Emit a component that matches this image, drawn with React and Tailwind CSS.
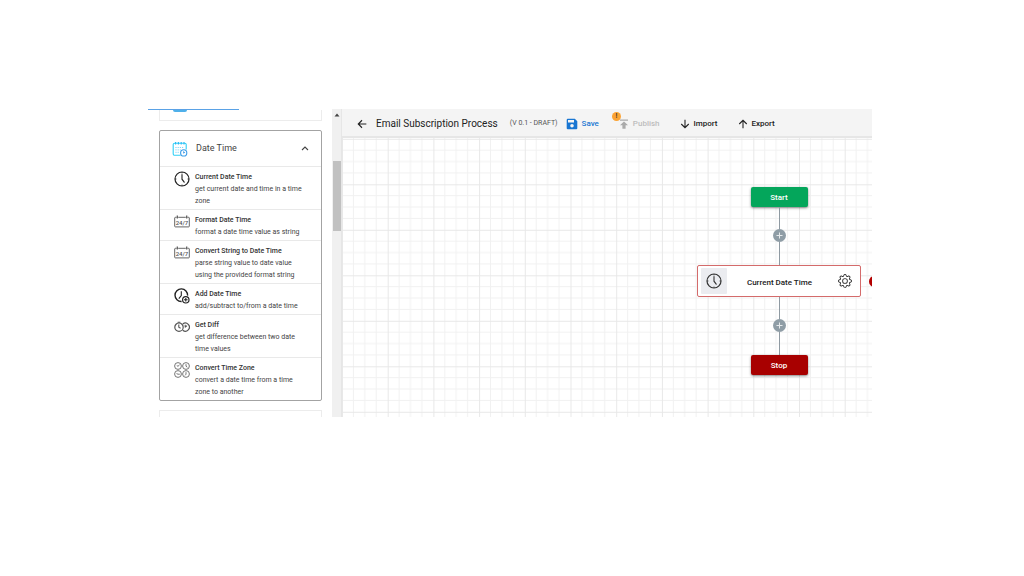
import React, { useState } from "react";
import { BsGear } from "react-icons/bs";

function ClockIcon({ className }) {
  return (
    <svg viewBox="0 0 16 16" className={className} fill="none" stroke="currentColor" aria-hidden="true">
      <circle cx="8" cy="8" r="7" strokeWidth="1.2" />
      <path d="M8 3.6V8.2L10.2 11.2" strokeWidth="1.1" strokeLinecap="round" />
      <path d="M8 1v1.4M8 13.6V15M1 8h1.4M13.6 8H15" strokeWidth="0.9" />
    </svg>
  );
}

function DayNightIcon({ className }) {
  return (
    <svg viewBox="0 0 16 16" className={className} fill="none" stroke="currentColor" aria-hidden="true">
      <path d="M2.6 3.3H1.4a.7.7 0 0 0-.7.7v8.200a.7.7 0 0 0 .7.7h13.2a.7.7 0 0 0 .7-.7V4a.7.7 0 0 0-.7-.7h-1.2M4.2 3.3h7.6" strokeWidth="0.9" />
      <path d="M3.3 1.6v2.8M12.7 1.6v2.800" strokeWidth="1.2" />
      <text x="8" y="10.6" textAnchor="middle" fontSize="6" fontWeight="500" fontFamily="Roboto, sans-serif" fill="currentColor" stroke="none">
        24/7
      </text>
    </svg>
  );
}

function ClockPlusIcon({ className }) {
  return (
    <svg viewBox="0 0 16 16" className={className} fill="none" stroke="currentColor" aria-hidden="true">
      <path d="M13.6 7.6A6.3 6.3 0 1 0 7.6 13.5" strokeWidth="1.4" />
      <path d="M7.3 3.2V7.6L4.8 10.6" strokeWidth="1.1" />
      <circle cx="11.8" cy="11.8" r="3.2" strokeWidth="1.2" />
      <path d="M11.8 10v3.6M10 11.8h3.6" strokeWidth="1.1" />
    </svg>
  );
}

function TwoClocksIcon({ className }) {
  return (
    <svg viewBox="0 0 16 16" className={className} fill="none" stroke="currentColor" aria-hidden="true">
      <circle cx="5" cy="8.2" r="4.2" strokeWidth="1.2" />
      <path d="M8.8 5A4 4 0 1 1 8.8 11.200" strokeWidth="1.2" />
      <path d="M3.700 3.300h2.600M4.800 5.600v2.700l1.800 1M11.200 5.800v2.600M11 8.400l2-1.800" strokeWidth="1.1" />
    </svg>
  );
}

function FourClocksIcon({ className }) {
  return (
    <svg viewBox="0 0 16 16" className={className} fill="none" stroke="currentColor" strokeWidth="0.9" aria-hidden="true">
      <circle cx="4" cy="4" r="3.4" />
      <circle cx="12" cy="4" r="3.4" />
      <circle cx="4" cy="12" r="3.4" />
      <circle cx="12" cy="12" r="3.4" />
      <path d="M4 4.3 5.6 2.8M4 4.3 2.8 3.6M12 2.2V4.2L13.3 5.2M2.5 11.6 4 12.2H5.8M12 10.2V12.2L11 13.4" />
    </svg>
  );
}

function CalendarIcon({ className }) {
  return (
    <svg viewBox="0 0 16 16" className={className} fill="none" stroke="#28b8f5" aria-hidden="true">
      <path d="M8.6 14.2H2.6A1.4 1.4 0 0 1 1.2 12.8V3.6A1.4 1.4 0 0 1 2.6 2.2H12.8A1.4 1.4 0 0 1 14.2 3.6V8.6" stroke="#2fd0f6" strokeWidth="1.1" />
      <path d="M3.6 1v2.4M6.4 1v2.4M9.2 1v2.4M12 1v2.4" strokeWidth="1.1" />
      <path d="M3.4 6.500h8.8M3.4 8.900h5.4M3.4 11.300h4.4" stroke="#7fd6f8" strokeWidth="1" strokeDasharray="1.2 1" />
      <circle cx="11.7" cy="11.9" r="3.1" stroke="#3b9be8" strokeWidth="1.1" />
      <path d="M11.600 10.300V12.200L13 11.200" stroke="#3b9be8" strokeWidth="0.9" />
    </svg>
  );
}

function Arrow({ className }) {
  return (
    <svg viewBox="0 0 12 12" className={className} fill="none" stroke="currentColor" strokeWidth="1.3" aria-hidden="true">
      <path d="M6 11.200V1.600M1.500 6 6 1.500 10.500 6" />
    </svg>
  );
}

const actions = [
  { title: "Current Date Time", text: "get current date and time in a time zone", Icon: ClockIcon, tone: "text-[#222222]" },
  { title: "Format Date Time", text: "format a date time value as string", Icon: DayNightIcon, tone: "text-[#555555]" },
  { title: "Convert String to Date Time", text: "parse string value to date value using the provided format string", Icon: DayNightIcon, tone: "text-[#555555]" },
  { title: "Add Date Time", text: "add/subtract to/from a date time", Icon: ClockPlusIcon, tone: "text-[#222222]" },
  { title: "Get Diff", text: "get difference between two date time values", Icon: TwoClocksIcon, tone: "text-[#555555]" },
  { title: "Convert Time Zone", text: "convert a date time from a time zone to another", Icon: FourClocksIcon, tone: "text-[#666666]" },
];

function Sidebar() {
  const [open, setOpen] = useState(true);
  return (
    <aside className="flex w-[193px] shrink-0 overflow-hidden">
      <div className="min-w-0 flex-1">
        <div className="h-px w-[91px] bg-[#5aa2e6]" />
        <div className="pl-[11px] pr-2.5">
          <div className="h-[11px] border-x border-b border-[#ececec] pl-[13px]">
            <div className="h-0.5 w-3.5 rounded-b-sm bg-[#4fb0ea]" />
          </div>
          <section className="mt-[9px] rounded-[2px] border border-[#a3a3a3]">
            <h2>
              <button
                type="button"
                aria-expanded={open}
                onClick={() => setOpen(!open)}
                className="flex h-[35px] w-full items-center px-3 text-left text-[9px] text-[#444444]"
              >
                <CalendarIcon className="size-4" />
                <span className="ml-2 flex-1">Date Time</span>
                <svg viewBox="0 0 8 8" className="size-2" fill="none" stroke="#444444" strokeWidth="1.1" aria-hidden="true">
                  <path d="M1 5 4 2 7 5" />
                </svg>
              </button>
            </h2>
            {open && (
              <ul>
                {actions.map(({ title, text, Icon, tone }) => (
                  <li key={title} className="flex border-t border-[#e9e9e9] pb-0.5 pl-3.5 pr-4 pt-1">
                    <Icon className={`size-4 shrink-0 ${tone}`} />
                    <div className="ml-[5px] text-[7px] leading-3 text-[#444444]">
                      <h3 className="font-medium whitespace-nowrap text-[#333333]">{title}</h3>
                      <p>{text}</p>
                    </div>
                  </li>
                ))}
              </ul>
            )}
          </section>
          <div className="mt-[9px] h-3 border border-[#ececec]" />
        </div>
      </div>
      <div className="flex w-[9px] flex-col items-center bg-[#f0f0f0]">
        <svg viewBox="0 0 8 8" className="mt-0.5 size-2" fill="#444444" aria-hidden="true">
          <path d="M1.500 5.500 4 2.500 6.500 5.500z" />
        </svg>
        <div className="mt-[42px] h-[70px] w-2 bg-[#c1c1c1]" />
      </div>
    </aside>
  );
}

function Toolbar() {
  return (
    <header className="flex h-[29px] items-center border-b-2 border-[#e6e6e6] bg-[#f4f4f4] pl-[15px] pt-0.5 text-[8px] font-medium text-[#222222]">
      <button type="button" aria-label="Back">
        <Arrow className="size-2.5 -rotate-90" />
      </button>
      <h1 className="ml-[9px] text-[10px] font-normal whitespace-nowrap text-[#222222]">Email Subscription Process</h1>
      <span className="ml-3 text-[7px] font-normal whitespace-nowrap text-[#555555]">(V 0.1 - DRAFT)</span>
      <button type="button" className="ml-2 flex items-center gap-1 text-[#1976d2]">
        <svg viewBox="0 0 12 12" className="size-3" fill="currentColor" aria-hidden="true">
          <path fillRule="evenodd" d="M1.800.8H8.800L11.300 3.300V10.200A1.100 1.100 0 0 1 10.200 11.300H1.800A1.100 1.100 0 0 1 .7 10.200V1.900A1.100 1.100 0 0 1 1.800.8ZM2 2V4.500H8V2ZM6 6A1.800 1.800 0 1 0 6 9.600 1.800 1.800 0 0 0 6 6Z" />
        </svg>
        Save
      </button>
      <button type="button" disabled className="relative ml-5 flex items-center gap-1 text-[#bdbdbd]">
        <span className="absolute -left-[7px] -top-1.5 flex size-[9px] items-center justify-center rounded-full bg-[#fba333] text-[7px] leading-none text-[#333333]">
          !
        </span>
        <svg viewBox="0 0 10 10" className="size-2.5" fill="#aaaaaa" aria-hidden="true">
          <path d="M1 .5H9V1.800H1ZM5 2.500 9 6.200H6.600V9.800H3.400V6.200H1Z" />
        </svg>
        Publish
      </button>
      <button type="button" className="ml-5 flex items-center gap-1">
        <Arrow className="size-2.5 rotate-180" />
        Import
      </button>
      <button type="button" className="ml-5 flex items-center gap-1">
        <Arrow className="size-2.5" />
        Export
      </button>
    </header>
  );
}

function AddStep() {
  return (
    <div className="flex flex-col items-center">
      <div className="h-[22px] w-px bg-[#8f9aa2]" />
      <button type="button" aria-label="Add step" className="flex size-[13px] items-center justify-center rounded-full bg-[#8f9da6]">
        <svg viewBox="0 0 7 7" className="size-[7px]" stroke="#e6eaec" aria-hidden="true">
          <path d="M3.500.5v6M.5 3.500h6" />
        </svg>
      </button>
      <div className="h-[23px] w-px bg-[#8f9aa2]" />
    </div>
  );
}

function Canvas() {
  return (
    <div className="relative flex-1 overflow-hidden">
      <svg className="absolute inset-0 h-full w-full" aria-hidden="true">
        <defs>
          <pattern id="grid" width="45.700" height="45.500" x="0" y="0.800" patternUnits="userSpaceOnUse">
            <path d="M11.400 0V45.500M22.800 0V45.500M34.200 0V45.500M0 11.400H45.700M0 22.700H45.700M0 34.100H45.700" stroke="#f1f1f1" strokeWidth="1" />
            <path d="M.5 0V45.500M0 .5H45.700" stroke="#e8e8e8" strokeWidth="1" />
          </pattern>
        </defs>
        <rect width="100%" height="100%" fill="url(#grid)" />
      </svg>
      <div className="absolute right-[11px] top-[49px] flex w-[164px] flex-col items-center text-[8px] font-medium">
        <button type="button" className="h-5 w-[57px] rounded-[2px] bg-[#04a65b] pt-px text-white shadow-sm shadow-black/40">
          Start
        </button>
        <AddStep />
        <div className="flex h-8 w-full items-center rounded-[2px] border border-[#d46b6b] bg-white pl-[3px] pr-2">
          <span className="flex size-[26px] items-center justify-center rounded-[1px] bg-[#ebecf0]">
            <ClockIcon className="size-4 text-[#333333]" />
          </span>
          <span className="flex-1 pr-1.5 pt-1 text-center text-[#222222]">Current Date Time</span>
          <button type="button" aria-label="Settings">
            <BsGear className="size-3.5 text-[#333333]" />
          </button>
        </div>
        <AddStep />
        <button type="button" className="h-5 w-[57px] rounded-[2px] bg-[#a80000] pt-px text-white shadow-sm shadow-black/40">
          Stop
        </button>
      </div>
      <div className="absolute -right-2 top-[138px] size-[11px] rounded-full bg-[#b30000]" />
    </div>
  );
}

export default function App() {
  return (
    <div className="min-h-screen bg-white pl-[148px] pr-[152px] pt-[109px] font-[Roboto,sans-serif]">
      <main className="flex h-[308px] overflow-hidden">
        <Sidebar />
        <div className="flex min-w-0 flex-1 flex-col border-l border-[#e6e6e6]">
          <Toolbar />
          <Canvas />
        </div>
      </main>
    </div>
  );
}
